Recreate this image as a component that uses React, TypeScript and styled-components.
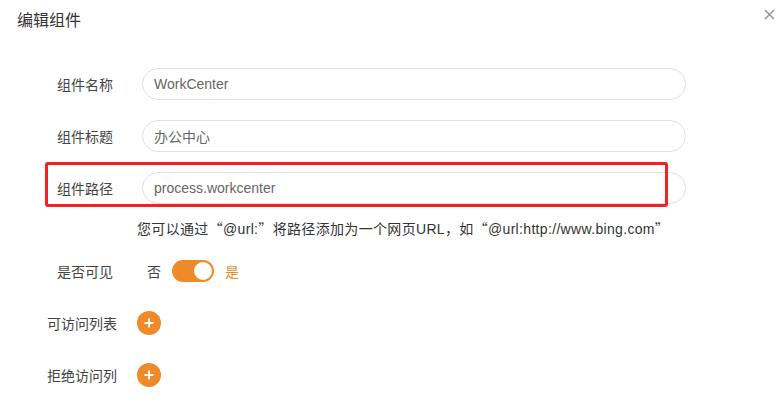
import React, { useState } from "react";
import styled, { createGlobalStyle } from "styled-components";

const GlobalStyle = createGlobalStyle`
  html, body {
    margin: 0;
    padding: 0;
    background: #fff;
  }
  body {
    font-family: "Liberation Sans", "Noto Sans CJK SC", sans-serif;
    color: #333;
  }
`;

const orange = "#ef8a28";

const Dialog = styled.div`
  position: relative;
  width: 777px;
  height: 403px;
  box-sizing: border-box;
  overflow: hidden;
`;

const Header = styled.div`
  height: 40px;
  display: flex;
  align-items: center;
  padding-left: 17px;
  font-size: 16px;
  color: #333;
  line-height: 1;
  padding-top: 2px;
  box-sizing: border-box;
`;

const CloseBtn = styled.button`
  position: absolute;
  top: 6px;
  right: 0;
  width: 16px;
  height: 16px;
  border: none;
  background: none;
  padding: 0;
  cursor: pointer;
  display: flex;
  align-items: center;
  justify-content: center;
`;

const Form = styled.div`
  display: flex;
  flex-direction: column;
  padding-top: 28px;
`;

const Row = styled.div<{ $mt?: number }>`
  display: grid;
  grid-template-columns: 113px 1fr;
  column-gap: 29px;
  align-items: center;
  height: 32px;
  margin-top: ${(p) => p.$mt ?? 0}px;
`;

const ActionRow = styled.div`
  display: grid;
  grid-template-columns: 117px 1fr;
  column-gap: 20px;
  align-items: center;
  height: 32px;
  margin-top: 20px;
`;

const Label = styled.div`
  text-align: right;
  font-size: 14px;
  color: #444;
  white-space: nowrap;
`;

const Input = styled.input`
  width: 544px;
  height: 32px;
  box-sizing: border-box;
  border: 1px solid #e1e1e8;
  border-radius: 16px;
  padding: 0 11px;
  font-size: 14px;
  font-family: "Liberation Sans", "Noto Sans CJK SC", sans-serif;
  color: #666;
  outline: none;
  background: #fff;
`;

const Hint = styled.div`
  margin-top: 14px;
  padding-left: 137px;
  font-size: 14px;
  line-height: 20px;
  color: #333;
  letter-spacing: 0.33px;
  white-space: nowrap;
`;

const Quote = styled.span`
  font-family: "Noto Sans CJK SC", sans-serif;
`;

const SwitchWrap = styled.div`
  display: flex;
  align-items: center;
  gap: 11px;
  margin-left: 5px;
  font-size: 14px;
`;

const SwitchText = styled.span<{ $active?: boolean }>`
  color: ${(p) => (p.$active ? orange : "#444")};
`;

const Track = styled.button<{ $on: boolean }>`
  position: relative;
  width: 42px;
  height: 22px;
  border-radius: 11px;
  border: none;
  padding: 0;
  cursor: pointer;
  background: ${(p) => (p.$on ? orange : "#ccc")};
`;

const Knob = styled.span<{ $on: boolean }>`
  position: absolute;
  top: 2px;
  left: ${(p) => (p.$on ? 22 : 2)}px;
  width: 18px;
  height: 18px;
  border-radius: 50%;
  background: #fff;
`;

const AddBtn = styled.button`
  width: 24px;
  height: 24px;
  border-radius: 50%;
  border: none;
  padding: 0;
  background: ${orange};
  display: flex;
  align-items: center;
  justify-content: center;
  cursor: pointer;
`;

const Highlight = styled.div`
  position: absolute;
  left: 45px;
  top: 162px;
  width: 623px;
  height: 45px;
  box-sizing: border-box;
  border: 3px solid #f52020;
  border-radius: 3px;
  pointer-events: none;
`;

const Plus = () => (
  <svg width="10" height="10" viewBox="0 0 10 10">
    <path d="M5 0.5v9M0.5 5h9" stroke="#fff" strokeWidth="1.8" />
  </svg>
);

export default function App() {
  const [visible, setVisible] = useState(true);
  return (
    <Dialog>
      <GlobalStyle />
      <Header>编辑组件</Header>
      <CloseBtn aria-label="close">
        <svg width="11" height="11" viewBox="0 0 11 11">
          <path d="M1 1l9 9M10 1l-9 9" stroke="#999" strokeWidth="1.6" />
        </svg>
      </CloseBtn>
      <Form>
        <Row>
          <Label>组件名称</Label>
          <Input defaultValue="WorkCenter" />
        </Row>
        <Row $mt={20}>
          <Label>组件标题</Label>
          <Input defaultValue="办公中心" />
        </Row>
        <Row $mt={20}>
          <Label>组件路径</Label>
          <Input defaultValue="process.workcenter" />
        </Row>
        <Hint>
          您可以通过<Quote>“</Quote>@url:<Quote>”</Quote>将路径添加为一个网页URL，如
          <Quote>“</Quote>@url:http://www.bing.com<Quote>”</Quote>
        </Hint>
        <Row $mt={16}>
          <Label>是否可见</Label>
          <SwitchWrap>
            <SwitchText>否</SwitchText>
            <Track $on={visible} onClick={() => setVisible(!visible)}>
              <Knob $on={visible} />
            </Track>
            <SwitchText $active={visible}>是</SwitchText>
          </SwitchWrap>
        </Row>
        <ActionRow>
          <Label>可访问列表</Label>
          <AddBtn aria-label="add">
            <Plus />
          </AddBtn>
        </ActionRow>
        <ActionRow>
          <Label>拒绝访问列</Label>
          <AddBtn aria-label="add">
            <Plus />
          </AddBtn>
        </ActionRow>
      </Form>
      <Highlight />
    </Dialog>
  );
}
